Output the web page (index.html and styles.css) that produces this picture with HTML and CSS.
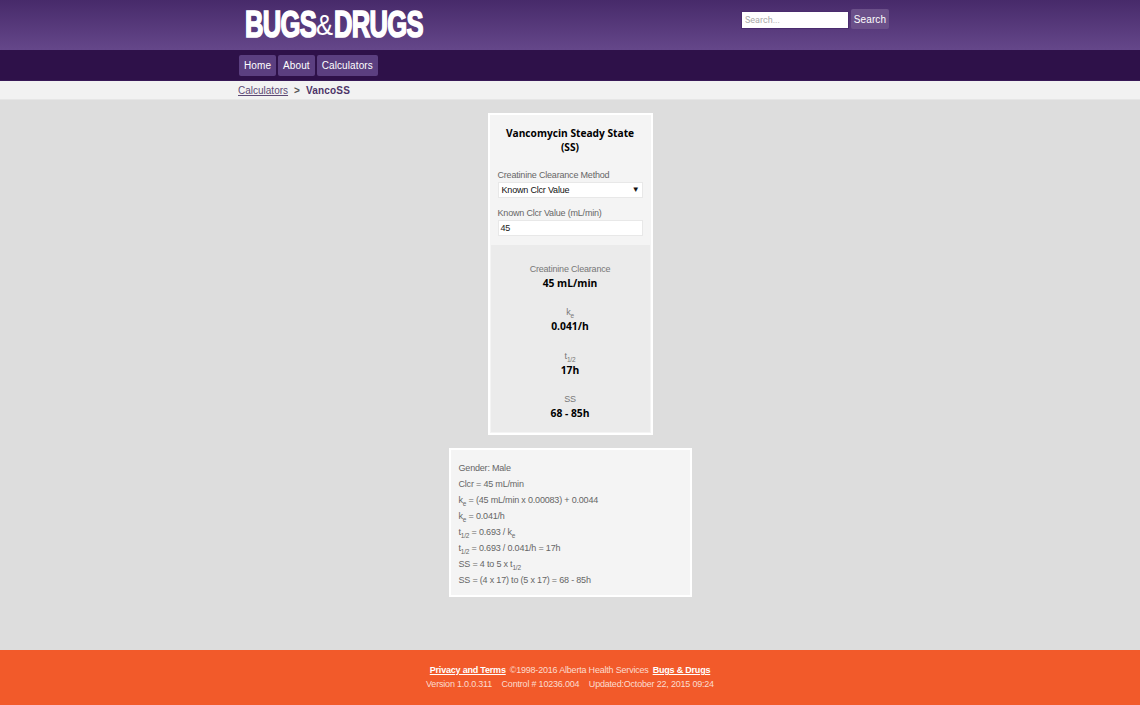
FILE: index.html
```html
<!DOCTYPE html>
<html lang="en">
<head>
<meta charset="utf-8">
<title>VancoSS - Bugs &amp; Drugs</title>
<link rel="stylesheet" href="styles.css">
</head>
<body>
<header class="masthead">
  <div class="wrap masthead-inner">
    <a class="logo" href="#"><span class="logo-word">BUGS</span><span class="logo-amp">&amp;</span><span class="logo-word">DRUGS</span></a>
    <form class="search">
      <input class="search-input" type="text" placeholder="Search...">
      <button class="btn search-btn" type="button">Search</button>
    </form>
  </div>
</header>
<nav class="nav">
  <div class="wrap nav-inner">
    <a class="btn nav-btn" href="#">Home</a>
    <a class="btn nav-btn" href="#">About</a>
    <a class="btn nav-btn" href="#">Calculators</a>
  </div>
</nav>
<div class="crumbs">
  <div class="wrap crumbs-inner">
    <a class="crumb-link" href="#">Calculators</a>
    <span class="crumb-sep">&gt;</span>
    <span class="crumb-current">VancoSS</span>
  </div>
</div>
<main class="main">
  <section class="card calc">
    <div class="calc-form">
      <h1 class="calc-title">Vancomycin Steady State (SS)</h1>
      <label class="field-label">Creatinine Clearance Method</label>
      <div class="select"><span>Known Clcr Value</span><span class="select-arrow">▼</span></div>
      <label class="field-label field-label-second">Known Clcr Value (mL/min)</label>
      <div class="text-field">45</div>
    </div>
    <div class="results">
      <div class="result"><div class="result-label">Creatinine Clearance</div><div class="result-value">45 mL/min</div></div>
      <div class="result"><div class="result-label">k<sub>e</sub></div><div class="result-value">0.041/h</div></div>
      <div class="result"><div class="result-label">t<sub>1/2</sub></div><div class="result-value">17h</div></div>
      <div class="result"><div class="result-label">SS</div><div class="result-value">68 - 85h</div></div>
    </div>
  </section>
  <section class="card workings">
    <div class="line">Gender: Male</div>
    <div class="line">Clcr = 45 mL/min</div>
    <div class="line">k<sub>e</sub> = (45 mL/min x 0.00083) + 0.0044</div>
    <div class="line">k<sub>e</sub> = 0.041/h</div>
    <div class="line">t<sub>1/2</sub> = 0.693 / k<sub>e</sub></div>
    <div class="line">t<sub>1/2</sub> = 0.693 / 0.041/h = 17h</div>
    <div class="line">SS = 4 to 5 x t<sub>1/2</sub></div>
    <div class="line">SS = (4 x 17) to (5 x 17) = 68 - 85h</div>
  </section>
</main>
<footer class="footer">
  <div class="footer-row"><a class="footer-link" href="#">Privacy and Terms</a><span class="footer-copy">©1998-2016 Alberta Health Services</span><a class="footer-link" href="#">Bugs &amp; Drugs</a></div>
  <div class="footer-row footer-meta"><span>Version 1.0.0.311</span><span>Control # 10236.004</span><span>Updated:October 22, 2015 09:24</span></div>
</footer>
</body>
</html>
```
FILE: styles.css
```css
* { box-sizing: border-box; }
html, body { margin: 0; padding: 0; }
body {
  width: 1140px;
  height: 705px;
  display: flex;
  flex-direction: column;
  overflow: hidden;
  background: #dddddd;
  font-family: "Liberation Sans", Arial, sans-serif;
  font-size: 9px;
  letter-spacing: -0.19px;
  color: #666;
}
.wrap { width: 664px; margin-left: 238px; }

.masthead {
  height: 50px;
  background: linear-gradient(#472a6a, #65478a);
}
.masthead-inner { display: flex; align-items: flex-start; justify-content: space-between; padding-left: 7px; }
.logo {
  display: flex;
  align-items: center;
  width: 178px;
  height: 27px;
  margin-top: 11px;
  color: #fff;
  text-decoration: none;
  white-space: nowrap;
}
.logo-word {
  display: inline-block;
  font-size: 37px;
  line-height: 27px;
  font-weight: 700;
  letter-spacing: -1px;
  -webkit-text-stroke: 1.7px #fff;
  transform: scaleX(0.69);
  transform-origin: left center;
}
.logo-word:first-child { width: 71px; }
.logo-word:last-child { width: 88px; }
.logo-amp {
  font-size: 30px;
  line-height: 27px;
  font-weight: 400;
  letter-spacing: 0;
  width: 18px;
  transform: scaleX(0.85);
  transform-origin: left center;
}
.search { display: flex; align-items: flex-start; gap: 3px; margin-top: 9px; margin-right: 13px; }
.search-input {
  width: 106px;
  height: 16px;
  margin-top: 3px;
  padding: 0 3px;
  border: 0;
  border-radius: 0;
  box-shadow: 0 0 0 1px #4a2c6e;
  background: #fff;
  font-family: Roboto, "Liberation Sans", sans-serif;
  font-size: 9px;
}
.search-input::placeholder { color: #aaa; opacity: 1; }
.btn {
  display: block;
  background: #60437f;
  color: #fff;
  border: 0;
  border-radius: 2px;
  font-family: "Liberation Sans", Arial, sans-serif;
  font-size: 10px;
  letter-spacing: 0.1px;
  text-decoration: none;
}
.search-btn { width: 38px; height: 20px; padding: 0; background: #6b5089; }

.nav { height: 31px; background: #2e1149; border-bottom: 1px solid #381a57; }
.nav-inner { display: flex; gap: 2px; padding-top: 5px; padding-left: 1px; }
.nav-btn { height: 21px; padding: 0 5px; line-height: 21px; background: #5b3f80; }

.crumbs {
  height: 19px;
  background: #f2f2f2;
  border-bottom: 1px solid #e6e6e6;
  font-size: 10px;
  letter-spacing: 0;
}
.crumbs-inner { display: flex; gap: 6px; line-height: 19px; }
.crumb-link { color: #5c4a75; text-decoration: underline; }
.crumb-sep { font-weight: 700; color: #555; }
.crumb-current { font-weight: 700; color: #4c3468; letter-spacing: .2px; }

.main { flex: 1; display: flex; flex-direction: column; align-items: center; padding-top: 13px; gap: 13px; }
.card { background: #f4f4f4; border: 2px solid #fff; }
.calc { width: 165px; height: 322px; display: flex; flex-direction: column; }
.calc-form { flex: none; height: 130px; padding: 11px 8px 0; }
.calc-title {
  margin: 0 0 14px;
  font-family: "Open Sans", sans-serif;
  font-size: 10.2px;
  line-height: 14px;
  letter-spacing: 0;
  font-weight: 700;
  color: #000;
  text-align: center;
}
.field-label { display: block; height: 14px; line-height: 14px; white-space: nowrap; }
.field-label-second { margin-top: 8px; }
.select, .text-field {
  height: 16px;
  background: #fff;
  border: 1px solid #e8e8e8;
  line-height: 14px;
  padding: 0 3px;
  color: #222;
}
.text-field { padding-left: 2px; }
.select { display: flex; justify-content: space-between; color: #111; }
.select-arrow { font-size: 8px; line-height: 14px; margin-right: -1px; }
.results {
  flex: 1;
  min-height: 0;
  background: #ebebeb;
  margin: 0 1px 1px;
  padding-top: 18px;
  text-align: center;
}
.result { height: 43.4px; }
.result-label { line-height: 13px; height: 13px; color: #777; }
.result-label sub { font-size: 6.5px; line-height: 0; }
.result-value {
  font-family: "Open Sans", sans-serif;
  font-size: 10.3px;
  font-weight: 700;
  line-height: 15px;
  letter-spacing: 0;
  color: #000;
}
.workings { width: 243px; height: 149px; padding: 10px 8px 0; }
.line { height: 16px; line-height: 16px; white-space: nowrap; color: #666; }
.line sub { font-size: 6.5px; line-height: 0; }

.footer {
  height: 55px;
  background: #f25a2a;
  color: #fbdccf;
  text-align: center;
  padding-top: 14px;
  line-height: 13.5px;
  letter-spacing: -0.2px;
}
.footer-row { display: flex; justify-content: center; gap: 4px; }
.footer-link { color: #fff; font-weight: 700; text-decoration: underline; }
.footer-meta { gap: 9.5px; }
```
